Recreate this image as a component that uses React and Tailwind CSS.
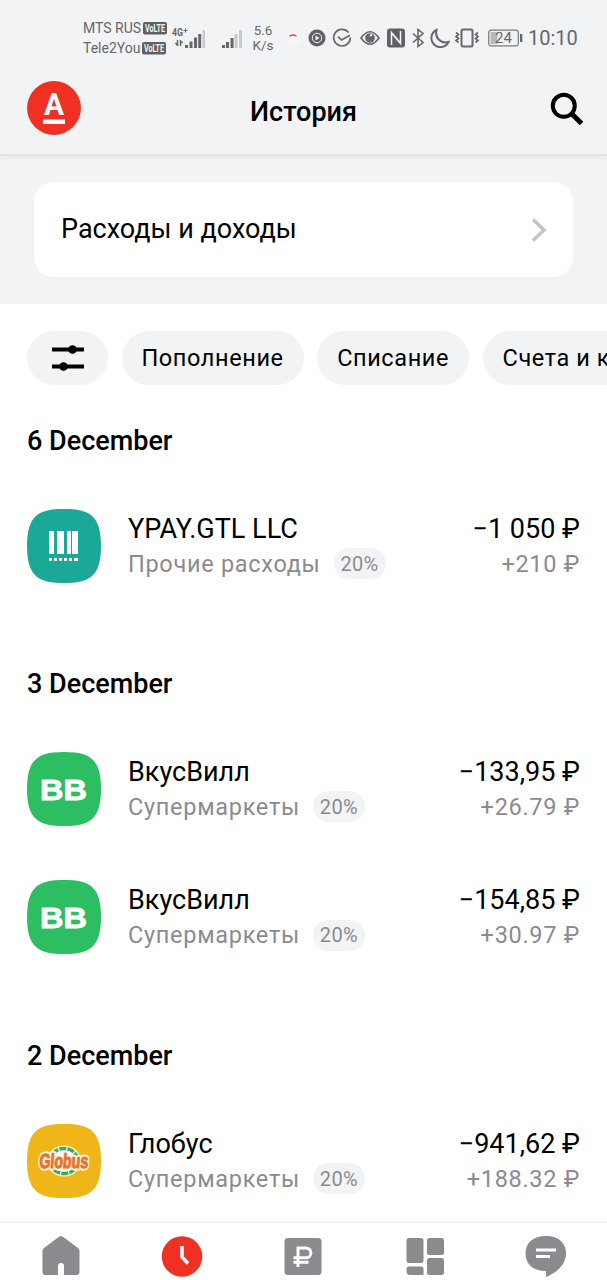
const groups = [
  {
    date: "6 December",
    items: [
      { id: 1, logo: "barcode", name: "YPAY.GTL LLC", category: "Прочие расходы", amount: "1 050 ₽", cashback: "+210 ₽" },
    ],
  },
  {
    date: "3 December",
    items: [
      { id: 2, logo: "vkusvill", name: "ВкусВилл", category: "Супермаркеты", amount: "133,95 ₽", cashback: "+26.79 ₽" },
      { id: 3, logo: "vkusvill", name: "ВкусВилл", category: "Супермаркеты", amount: "154,85 ₽", cashback: "+30.97 ₽" },
    ],
  },
  {
    date: "2 December",
    items: [
      { id: 4, logo: "globus", name: "Глобус", category: "Супермаркеты", amount: "941,62 ₽", cashback: "+188.32 ₽" },
    ],
  },
];

const filters = ["Пополнение", "Списание", "Счета и карты"];

const squircle = "M37 0C63 0 74 7 74 37S63 74 37 74 0 67 0 37 11 0 37 0Z";

function Volte() {
  return (
    <svg className="h-[13px] w-6 shrink-0" viewBox="0 0 24 13">
      <rect width="24" height="12.500" rx="2" fill="#5f6062" />
      <text x="2" y="10" textLength="20" lengthAdjust="spacingAndGlyphs" fontSize="10" fontWeight="700" fill="#f2f3f5">
        VoLTE
      </text>
    </svg>
  );
}

function StatusBar() {
  return (
    <div className="flex h-[76px] items-center pl-[83px] text-[#66676a]">
      <div className="w-[88px] text-[14px] leading-5">
        <div className="flex items-center gap-[2px] whitespace-nowrap">
          <span>MTS RUS</span>
          <Volte />
        </div>
        <div className="flex items-center gap-[2px] whitespace-nowrap">
          <span>Tele2You</span>
          <Volte />
        </div>
      </div>

      {/* Signal strength */}
      <svg className="h-6 w-[74px] shrink-0" viewBox="0 0 74 24" fill="currentColor">
        <text x="1" y="10" fontSize="11" fontWeight="700" textLength="11" lengthAdjust="spacingAndGlyphs">4G</text>
        <path d="M12.500 4.500h4M14.500 2.500v4" stroke="currentColor" strokeWidth="1" />
        <path d="M6.500 14v6M4.500 17l2 2.500M9.500 14v6M11.500 17l-2-2.500" stroke="currentColor" strokeWidth="1.500" />
        <path d="M14 19h3v3h-3zM18.500 15.500h3V22h-3zM23 11.500h3V22h-3zM27.200 8h3v14h-3z" />
        <path d="M31.500 4h2.500v18h-2.500z" fill="#c9cacc" />
        <path d="M51 19h3v3h-3zM55 16h3v6h-3zM59.500 12h3v10h-3z" />
        <path d="M63.500 8h3v14h-3zM68 4h3v18h-3z" fill="#c9cacc" />
      </svg>

      <div className="ml-[7px] w-[22px] text-center text-[13.500px] leading-[15px]">
        5.6
        <br />
        K/s
      </div>

      <svg className="ml-[11px] h-4 w-[16px] shrink-0" viewBox="0 0 16 16">
        <circle cx="8" cy="8" r="7.500" fill="#f7f6f7" />
        <path d="M4.500 6.200q3.500-2.400 7 0" fill="none" stroke="#cf4d55" strokeWidth="1.300" />
      </svg>
      <svg className="ml-[7px] h-[18px] w-[18px] shrink-0" viewBox="0 0 18 18" fill="none">
        <circle cx="9" cy="9" r="8.500" fill="#606164" />
        <circle cx="9" cy="9" r="4.700" stroke="#f2f3f5" strokeWidth="1" />
        <path d="M7.500 6.500v5l4-2.500z" fill="#f2f3f5" />
      </svg>
      <svg className="ml-1.5 h-5 w-5 shrink-0" viewBox="0 0 20 20" fill="none" stroke="currentColor" strokeWidth="1.700">
        <path d="M16.500 4.500A8.300 8.300 0 1 0 18.300 9.500M6 8.700l3.500 3.300 8.500-4.700" />
      </svg>
      <svg className="ml-[8px] h-4 w-5 shrink-0" viewBox="0 0 20 16" fill="none" stroke="currentColor" strokeWidth="1.700">
        <path d="M1 8Q10-4.500 19 8 10 20.500 1 8Z" />
        <circle cx="10" cy="8" r="4" fill="currentColor" />
        <path d="M10 6l2-1.500" stroke="#f2f3f5" />
      </svg>
      <svg className="ml-[7px] h-5 w-[18px] shrink-0" viewBox="0 0 18 20">
        <rect width="18" height="19" y=".5" rx="3" fill="#606164" />
        <path d="M4.500 17V4.500l8.500 10M13.500 3V15.500L5 5.500" fill="none" stroke="#f2f3f5" strokeWidth="1.500" />
      </svg>
      <svg className="ml-[7px] h-5 w-3 shrink-0" viewBox="0 0 12 20" fill="none" stroke="currentColor" strokeWidth="1.600">
        <path d="M1 5.500l10 9-5 4V1.500l5 4-10 9" />
      </svg>
      <svg className="ml-1.5 h-5 w-5 shrink-0" viewBox="0 0 20 20" fill="none" stroke="currentColor" strokeWidth="2">
        <path d="M6.500 2A9 9 0 1 0 18.500 14C11 16 4.500 10 6.500 2Z" />
      </svg>
      <svg className="ml-[5px] h-5 w-[24px] shrink-0" viewBox="0 0 24 20" fill="none" stroke="currentColor">
        <rect x="6.500" y="1.500" width="11" height="17" rx="1.500" strokeWidth="2" />
        <path d="M1 4.500l2.500 2-2.500 2 2.500 2-2.500 2 2.500 2M23 4.500l-2.500 2 2.500 2-2.500 2 2.500 2-2.500 2" strokeWidth="1.700" />
      </svg>
      <svg className="ml-[9px] h-[18px] w-[35px] shrink-0" viewBox="0 0 35 18">
        <rect x=".7" y="1.200" width="29.600" height="15.600" rx="2.500" fill="none" stroke="#77787a" strokeWidth="1.200" />
        <path d="M2.500 3h7v12h-7z" fill="#b9babc" />
        <path d="M32 5h2.300v8H32z" fill="#66676a" />
        <text x="15.500" y="14.300" textAnchor="middle" fontSize="15" fill="#66676a">24</text>
      </svg>
      <span className="ml-[5px] text-[20px] leading-6">10:10</span>
    </div>
  );
}

function Header() {
  return (
    <header className="relative z-10 h-[156px] border-b-2 border-[#e2e3e5] bg-[#f2f3f5] shadow-[0_1px_5px_rgba(0,0,0,0.06)]">
      <StatusBar />
      <div className="grid grid-cols-3 items-start pt-[5px] pr-[23px] pl-[23px]">
        <svg className="ml-1 h-[54px] w-[54px]" viewBox="0 0 54 54">
          <circle cx="27" cy="27" r="27" fill="#ef3124" />
          <text x="17" y="34" textLength="20" lengthAdjust="spacingAndGlyphs" fontSize="32" fontWeight="700" fill="#fff">А</text>
          <path d="M16 38.500h22v4.500H16z" fill="#fff" />
        </svg>
        <h1 className="justify-self-center pt-[15px] text-[27px] leading-8 font-medium">История</h1>
        <svg className="mt-[11px] h-[34px] w-[34px] justify-self-end" viewBox="0 0 34 34" fill="none" stroke="#000" strokeWidth="4">
          <circle cx="13.800" cy="13.800" r="11" />
          <path d="M21.500 21.500l10 10" strokeWidth="5" />
        </svg>
      </div>
    </header>
  );
}

function MerchantLogo({ type }) {
  return (
    <svg className="h-[74px] w-[74px] shrink-0" viewBox="0 0 74 74">
      {type === "barcode" && (
        <>
          <path d={squircle} fill="#1ba897" />
          <path
            d="M22 22h5v23h-5zM30 22h7v23h-7zM40 22h4v23h-4zM45 22h6v23h-6zM22 49h3v3h-3zM27 49h3v3h-3zM32 49h3v3h-3zM37 49h3v3h-3zM42 49h3v3h-3zM47 49h4v3h-4z"
            fill="#fff"
          />
        </>
      )}
      {type === "vkusvill" && (
        <>
          <path d={squircle} fill="#2dbe64" />
          <text
            x="13"
            y="47.500"
            textLength="47"
            lengthAdjust="spacingAndGlyphs"
            fontFamily="Liberation Sans"
            fontSize="30"
            fontWeight="700"
            fill="#fff"
            stroke="#fff"
            strokeWidth=".8"
          >
            BB
          </text>
        </>
      )}
      {type === "globus" && (
        <>
          <path d={squircle} fill="#f0b518" />
          <ellipse cx="37" cy="37" rx="17" ry="15.500" fill="#f8f3cf" />
          <ellipse cx="37" cy="37" rx="14" ry="12.500" fill="#fff" stroke="#35ad62" strokeWidth="3.500" strokeDasharray="7 1.200" />
          <text
            x="12"
            y="44.500"
            textLength="49"
            lengthAdjust="spacingAndGlyphs"
            fontFamily="Liberation Sans"
            fontSize="20.500"
            fontWeight="700"
            fill="#ec7028"
            stroke="#fbf5dd"
            strokeWidth="5"
            strokeLinejoin="round"
            transform="skewX(-4) translate(3 0)"
          >
            Globus
          </text>
          <text
            aria-hidden="true"
            x="12"
            y="44.500"
            textLength="49"
            lengthAdjust="spacingAndGlyphs"
            fontFamily="Liberation Sans"
            fontSize="20.500"
            fontWeight="700"
            fill="#ec7028"
            stroke="#ec7028"
            strokeWidth="1"
            transform="skewX(-4) translate(3 0)"
          >
            Globus
          </text>
        </>
      )}
    </svg>
  );
}

function Transaction({ item }) {
  return (
    <li className="flex h-[128.400px] items-start pr-[27px] pl-[27px]">
      <MerchantLogo type={item.logo} />
      <div className="ml-[27px] min-w-0 flex-1 pt-1">
        <div className="text-[27px] leading-8">{item.name}</div>
        <div className="mt-[3px] flex items-center text-[#8b8b8f]">
          <span className="text-[23.500px] leading-8 tracking-[0.7px]">{item.category}</span>
          <span className="ml-[13px] flex h-[31px] w-[52px] items-center justify-center rounded-full bg-[#f2f3f5] text-[20px] tracking-[0.3px]">
            20%
          </span>
        </div>
      </div>
      <div className="pt-1 text-right whitespace-nowrap">
        <div className="text-[27px] leading-8">
          −{item.amount}
        </div>
        <div className="mt-[3px] text-[23.500px] leading-8 tracking-[0.7px] text-[#8b8b8f]">{item.cashback}</div>
      </div>
    </li>
  );
}

function BottomNav() {
  return (
    <nav className="grid h-[59px] shrink-0 grid-cols-5 items-start justify-items-center border-t-2 border-[#f2f3f5] bg-white pt-[13px] text-[#8a8a8f]">
      <svg className="h-[42px] w-[42px]" viewBox="0 0 42 42" fill="currentColor">
        <path d="M21 0Q22 0 24 1.500L38 12q1.500 1.200 1.500 3v21q0 3-3 3H24v-9q0-3-3-3t-3 3v9H5.500q-3 0-3-3V15q0-1.800 1.500-3L18 1.500Q20 0 21 0Z" />
      </svg>
      <svg className="h-[42px] w-[42px]" viewBox="0 0 42 42">
        <circle cx="21" cy="20.500" r="20.300" fill="#ef3124" />
        <path d="M21 10v11l6 6.500" fill="none" stroke="#fff" strokeWidth="3.500" />
      </svg>
      <svg className="h-[42px] w-[42px]" viewBox="0 0 42 42">
        <rect x="2.500" y="2" width="37" height="37" rx="3.500" fill="currentColor" />
        <path d="M16 31V12h8a4.900 4.900 0 0 1 0 9.800H11.500M11.500 26.300h15" fill="none" stroke="#fff" strokeWidth="3" />
      </svg>
      <svg className="h-[42px] w-[42px]" viewBox="0 0 42 42" fill="currentColor">
        <rect x="2.500" y="2" width="17" height="25" rx="2.500" />
        <rect x="23" y="2" width="17" height="17" rx="2.500" />
        <path d="M5 30.500h12q2.500 0 2.500 2.500v6H6q-3.500 0-3.500-4V33q0-2.500 2.500-2.500Z" />
        <rect x="23" y="22" width="17" height="17" rx="2.500" />
      </svg>
      <svg className="h-[42px] w-[42px]" viewBox="0 0 42 42">
        <path d="M21 0C34 0 41 7.500 41 17c0 11-8 19-20 24v-6C8 35 .5 28 .5 17.500S8 0 21 0Z" fill="currentColor" />
        <path d="M11 14h20M11 20.500h14" stroke="#fff" strokeWidth="3" />
      </svg>
    </nav>
  );
}

export default function App() {
  return (
    <div className="flex h-[1280px] w-[607px] flex-col overflow-hidden bg-white font-[Roboto,sans-serif] text-black">
      <Header />

      <section className="h-[148px] shrink-0 bg-[#f2f3f5] pt-[26px] pr-[34px] pl-[34px]">
        <button className="flex h-[95px] w-full items-center justify-between rounded-[20px] bg-white pr-[26px] pl-[27px] text-[27px]">
          <span>Расходы и доходы</span>
          <svg className="h-6 w-4" viewBox="0 0 16 24" fill="none" stroke="#c3c3c8" strokeWidth="3.500">
            <path d="M2 1.500L13 12 2 22.500" />
          </svg>
        </button>
      </section>

      <main className="min-h-0 flex-1 overflow-hidden">
        {/* Filters */}
        <div className="flex gap-[13.500px] overflow-hidden pt-[27px] pb-[9px] pl-[27px]">
          <button className="flex h-[54px] w-[81px] shrink-0 items-center justify-center rounded-full bg-[#f2f3f5]">
            <svg className="h-8 w-8" viewBox="0 0 32 32" fill="#000">
              <path d="M0 5.500h32v4H0zM0 22.500h32v4H0z" />
              <circle cx="20.500" cy="7.500" r="4.300" />
              <circle cx="11.500" cy="24.500" r="4.300" />
            </svg>
          </button>
          {filters.map((label) => (
            <button
              key={label}
              className="h-[54px] shrink-0 rounded-full bg-[#f2f3f5] px-5 pt-0.5 text-[23.500px] tracking-[0.600px] whitespace-nowrap"
            >
              {label}
            </button>
          ))}
        </div>

        {groups.map((group) => (
          <section key={group.date}>
            <h2 className="h-[114.800px] pt-[22px] pl-[27px] text-[27px] leading-[50px] font-medium">{group.date}</h2>
            <ul>
              {group.items.map((item) => (
                <Transaction key={item.id} item={item} />
              ))}
            </ul>
          </section>
        ))}
      </main>

      <BottomNav />
    </div>
  );
}
